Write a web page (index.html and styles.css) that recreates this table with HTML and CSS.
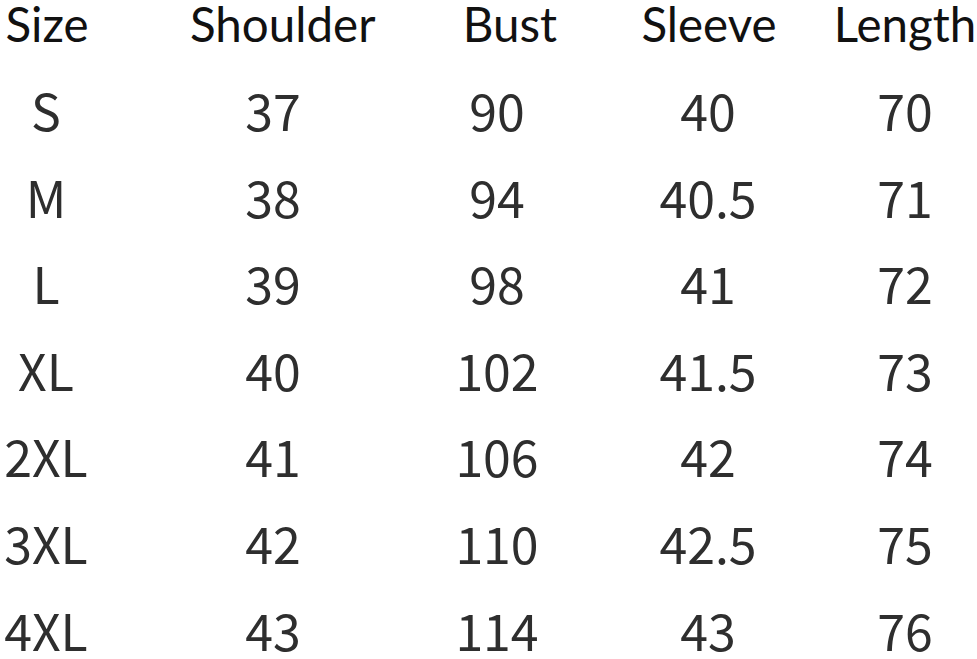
FILE: index.html
```html
<!DOCTYPE html>
<html lang="en">
<head>
<meta charset="utf-8">
<title>Size chart</title>
<link rel="stylesheet" href="styles.css">
</head>
<body>
<div class="chart">
  <div class="row head">
    <div class="c1">Size</div><div class="c2">Shoulder</div><div class="c3">Bust</div><div class="c4">Sleeve</div><div class="c5">Length</div>
  </div>
  <div class="row"><div class="c1">S</div><div class="c2">37</div><div class="c3">90</div><div class="c4">40</div><div class="c5">70</div></div>
  <div class="row"><div class="c1">M</div><div class="c2">38</div><div class="c3">94</div><div class="c4">40.5</div><div class="c5">71</div></div>
  <div class="row"><div class="c1">L</div><div class="c2">39</div><div class="c3">98</div><div class="c4">41</div><div class="c5">72</div></div>
  <div class="row"><div class="c1">XL</div><div class="c2">40</div><div class="c3">102</div><div class="c4">41.5</div><div class="c5">73</div></div>
  <div class="row"><div class="c1">2XL</div><div class="c2">41</div><div class="c3">106</div><div class="c4">42</div><div class="c5">74</div></div>
  <div class="row"><div class="c1">3XL</div><div class="c2">42</div><div class="c3">110</div><div class="c4">42.5</div><div class="c5">75</div></div>
  <div class="row"><div class="c1">4XL</div><div class="c2">43</div><div class="c3">114</div><div class="c4">43</div><div class="c5">76</div></div>
</div>
</body>
</html>
```

FILE: styles.css
```css
html, body {
  margin: 0;
  padding: 0;
  background: #ffffff;
  overflow: hidden;
}

.chart {
  width: 977px;
  height: 659px;
}

.row {
  display: flex;
  white-space: nowrap;
  font-family: "Noto Sans CJK SC", "Noto Sans", sans-serif;
  font-weight: 400;
  font-size: 50px;
  line-height: 86.6px;
  color: #2e2e2e;
}

.row > div {
  text-align: center;
  flex: none;
}

.c1 { width: 92px; }
.c2 { width: 150px; margin-left: 106px; }
.c3 { width: 150px; margin-left: 74px; }
.c4 { width: 150px; margin-left: 61px; }
.c5 { width: 150px; margin-left: 47px; }

.row.head {
  font-family: "Lato", "Open Sans", sans-serif;
  font-size: 47.5px;
  line-height: 48px;
  color: #111111;
  margin-bottom: 18px;
}

.head > div { width: 180px; }
.head .c1 { width: 94px; }
.head .c2 { margin-left: 96px; }
.head .c3 { margin-left: 50px; }
.head .c4 { margin-left: 19px; }
.head .c5 { margin-left: 16px; }
```
